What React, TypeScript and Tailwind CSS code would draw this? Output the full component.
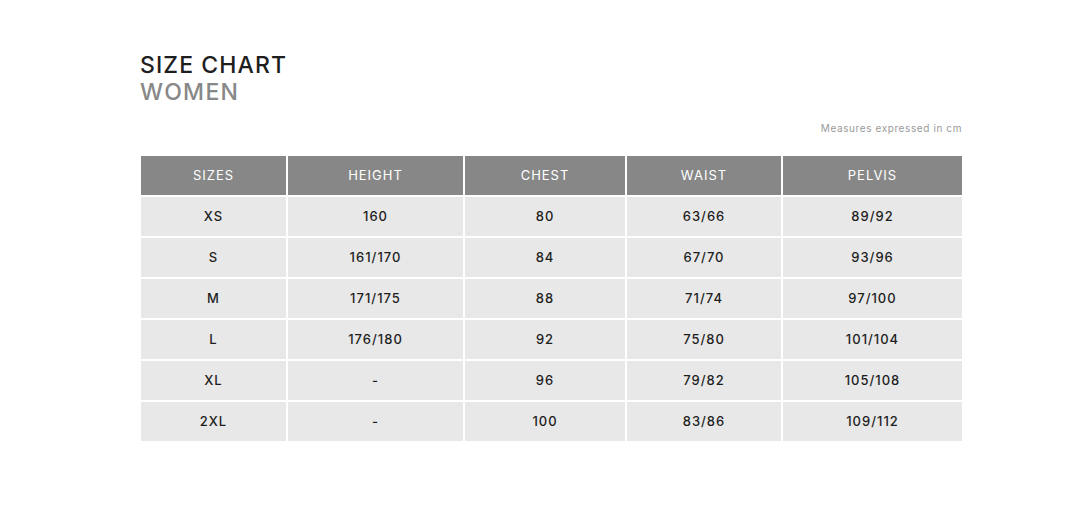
const headers = ['SIZES', 'HEIGHT', 'CHEST', 'WAIST', 'PELVIS'];

const rows: string[][] = [
  ['XS', '160', '80', '63/66', '89/92'],
  ['S', '161/170', '84', '67/70', '93/96'],
  ['M', '171/175', '88', '71/74', '97/100'],
  ['L', '176/180', '92', '75/80', '101/104'],
  ['XL', '-', '96', '79/82', '105/108'],
  ['2XL', '-', '100', '83/86', '109/112'],
];

export default function App() {
  return (
    <div
      className="w-[1090px] h-[508px] bg-white"
      style={{ fontFamily: 'Inter, "Noto Sans", sans-serif' }}
    >
      <div className="w-[821px] ml-[141px] pt-[51px]">
        {/* Title */}
        <div className="-ml-[1px]">
          <h1 className="text-[23px] leading-[28px] tracking-[1.1px] text-[#1e1e1e] font-medium">
            SIZE CHART
          </h1>
          <h2 className="text-[23px] leading-[26px] tracking-[1.3px] text-[#888888] font-medium">
            WOMEN
          </h2>
        </div>

        <p className="mt-[16px] text-right text-[10px] tracking-[0.6px] text-[#9a9a9a]">
          Measures expressed in cm
        </p>

        {/* Table */}
        <div className="mt-[20px] grid grid-cols-[145px_175px_160px_154px_179px] gap-[2px]">
          {headers.map((h) => (
            <div
              key={h}
              className="h-[39px] bg-[#878787] flex items-center justify-center text-white text-[13px] tracking-[1px]"
            >
              {h}
            </div>
          ))}
          {rows.map((row, i) =>
            row.map((cell, j) => (
              <div
                key={`${i}-${j}`}
                className="h-[39px] bg-[#e8e8e8] flex items-center justify-center text-[#1e1e1e] text-[13px] font-medium tracking-[1px]"
              >
                {cell}
              </div>
            ))
          )}
        </div>
      </div>
    </div>
  );
}
